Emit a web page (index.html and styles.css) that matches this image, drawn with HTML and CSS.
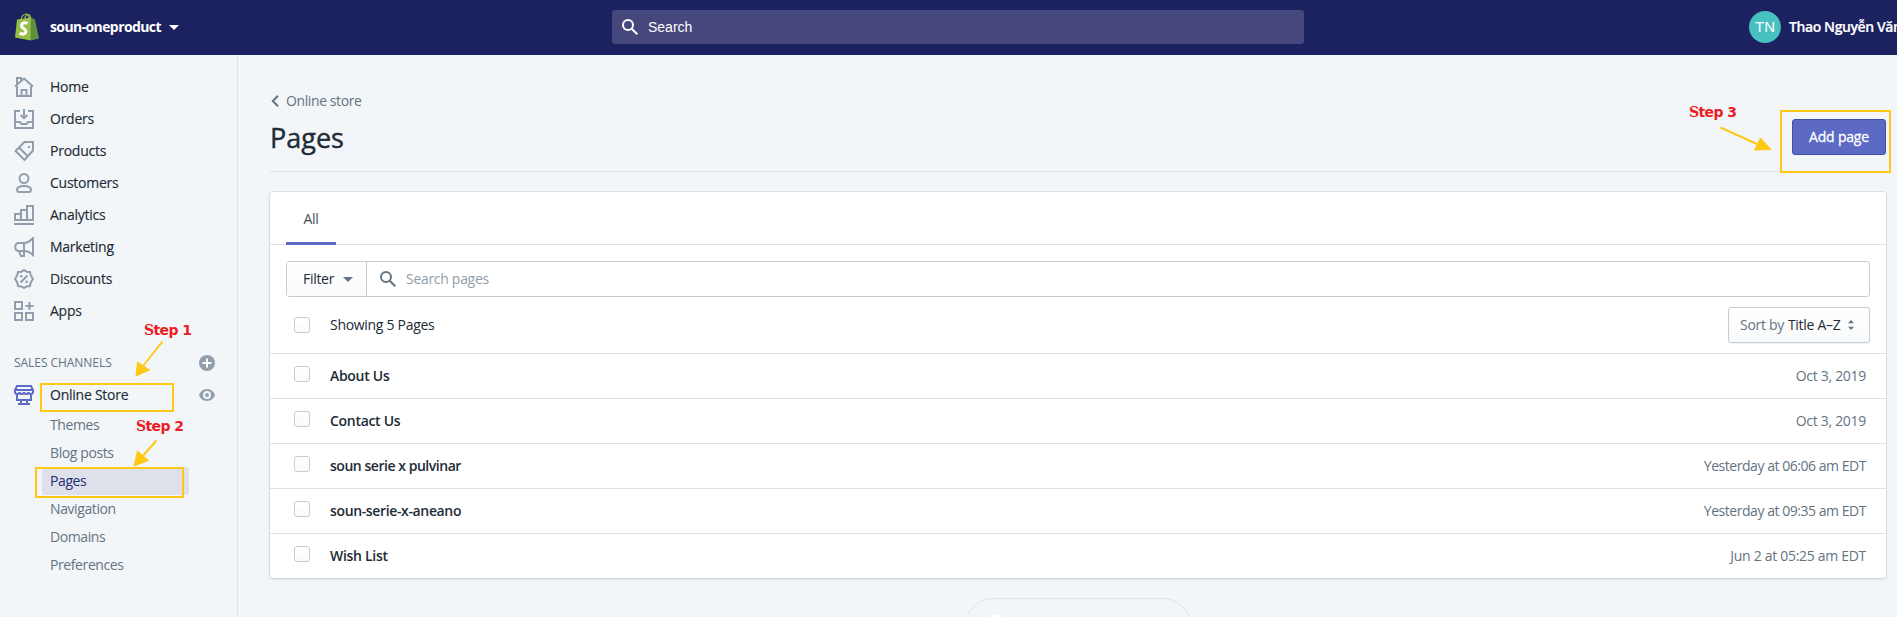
FILE: index.html
```html
<!DOCTYPE html>
<html lang="en">
<head>
<meta charset="utf-8">
<title>Pages</title>
<link rel="stylesheet" href="styles.css">
</head>
<body>
<div class="app">
  <header class="topbar">
    <div class="store">
      <svg class="logo" width="24" height="28" viewBox="0 0 24 28">
        <path d="M2 6.500 16 4.500 16 27.500 0 24.500z" fill="#95bf47"/>
        <path d="M16 4.500 20 6.500 24 25.500 15.500 27.500z" fill="#5e8e3e"/>
        <path d="M6 7C6.500 3 9 .8 11 1c2 .2 3 2.200 3.200 5M9.500 6.500C10 3 12 1 13.500 1.500 15 2 15.500 4 15.500 5.500" fill="none" stroke="#95bf47" stroke-width="1.200"/>
        <path d="M12.500 10.500C10.300 9.200 6.500 9.700 6.400 12.500c-.1 2.800 4.700 3.200 4.500 6-.2 3-4 3.100-6.200 1.500" fill="none" stroke="#fff" stroke-width="3"/>
      </svg>
      <span class="store-name">soun-oneproduct</span>
      <svg class="caret" width="10" height="5" viewBox="0 0 10 5"><path d="M0 0h10L5 5z" fill="#fff"/></svg>
    </div>
    <div class="global-search">
      <svg width="16" height="16" viewBox="0 0 16 16" fill="none" stroke="#fff" stroke-width="2"><circle cx="6" cy="6" r="5"/><path d="M9.700 9.700 15.300 15.300"/></svg>
      <span>Search</span>
    </div>
    <div class="user"><span class="avatar">TN</span><span class="user-name">Thao Nguyễn Văn</span></div>
  </header>
  <div class="body">
    <nav class="sidebar">
      <a class="nav"><svg class="ic" viewBox="0 0 20 20"><path d="M3 9v10h14V9M1 9.500 10 1.500l9 8M3 8V1h4v3M7.500 19v-6h5v6"/></svg><span>Home</span></a>
      <a class="nav"><svg class="ic" viewBox="0 0 20 20"><path d="M6 2H1v17h18V2h-5M10 0v9M6.500 6 10 9.200 13.500 6M1 13h5l1.500 2h5l1.500-2h5"/></svg><span>Orders</span></a>
      <a class="nav"><svg class="ic" viewBox="0 0 20 20"><path d="M10.500 1H19v8.500L10.500 19 1.500 10zM5 6.500l9 9"/><path d="M14 5h2v2h-2z" class="solid"/></svg><span>Products</span></a>
      <a class="nav"><svg class="ic" viewBox="0 0 20 20"><circle cx="10" cy="5.500" r="4.500"/><path d="M10 13c4 0 7 1.500 7 3.500S16 19 15 19H5c-1 0-2-.5-2-2.500S6 13 10 13z"/></svg><span>Customers</span></a>
      <a class="nav"><svg class="ic" viewBox="0 0 20 20"><path d="M1 15V9h6v6zM7 15V5h6v10zM13 15V1h6v14zM0 19h20"/></svg><span>Analytics</span></a>
      <a class="nav"><svg class="ic" viewBox="0 0 20 20"><path d="M19 1v17c-3-3-5-4-9-4H5c-5 0-5-8 0-8h5c4 0 6-1.500 9-5zM10 6v8M5 14l2 5h3v-5"/></svg><span>Marketing</span></a>
      <a class="nav"><svg class="ic" viewBox="0 0 20 20"><path d="m10 1 2.500 1.700 3.500.3.700 3.300L19 10l-2.300 3.500L16 17l-3.500.4L10 19l-2.500-1.600L4 17l-.7-3.500L1 10l2.300-3.700L4 3l3.500-.3zM6.500 13.500l7-7"/><circle cx="7.300" cy="7.300" r="1.300" class="solid"/><circle cx="12.700" cy="12.700" r="1.300" class="solid"/></svg><span>Discounts</span></a>
      <a class="nav"><svg class="ic" viewBox="0 0 20 20"><path d="M1 1h7v7H1zM1 12h7v7H1zM12 12h7v7h-7zM15.500 1v8M11.500 5h8"/></svg><span>Apps</span></a>
      <div class="section"><span>SALES CHANNELS</span>
        <svg width="16" height="16" viewBox="0 0 16 16"><circle cx="8" cy="8" r="8" fill="#919eab"/><path d="M8 3.500v9M3.500 8h9" stroke="#fff" stroke-width="2"/></svg>
      </div>
      <a class="nav channel"><svg class="ic" viewBox="0 0 20 20"><path d="M3 1h14l2 4v2c0 2.500-4.500 2.500-4.500 0 0 2.500-4.500 2.500-4.500 0 0 2.500-4.500 2.500-4.500 0C5.500 9.500 1 9.500 1 7V5zM1 5h18M3 9v6h14V9M7 15v4M13 15v4M4 19h12"/></svg><span>Online Store</span>
        <svg class="eye" width="16" height="12" viewBox="0 0 16 12"><path d="M8 0c4 0 7 3 8 6-1 3-4 6-8 6S1 9 0 6c1-3 4-6 8-6z" fill="#919eab"/><circle cx="8" cy="6" r="3" fill="none" stroke="#f4f6f8" stroke-width="2"/></svg>
      </a>
      <div class="subnav"><a>Themes</a><a>Blog posts</a><a class="active">Pages</a><a>Navigation</a><a>Domains</a><a>Preferences</a></div>
    </nav>
    <main class="main">
      <div class="crumb"><svg width="8" height="12" viewBox="0 0 8 12"><path d="M7 .8 1.800 6 7 11.200" fill="none" stroke="#637381" stroke-width="2"/></svg><span>Online store</span></div>
      <div class="heading"><h1>Pages</h1><button class="primary"><span>Add page</span></button></div>
      <section class="card">
        <div class="tabs"><div class="tab"><span>All</span></div></div>
        <div class="filters">
          <div class="filter"><span>Filter</span><svg width="10" height="5" viewBox="0 0 10 5"><path d="M0 0h10L5 5z" fill="#637381"/></svg></div>
          <div class="search"><svg width="16" height="16" viewBox="0 0 16 16" fill="none" stroke="#637381" stroke-width="2"><circle cx="6" cy="6" r="5"/><path d="M9.700 9.700 15.300 15.300"/></svg><span>Search pages</span></div>
        </div>
        <div class="bulk"><i class="check"></i><span class="count">Showing 5 Pages</span>
          <div class="sort"><span class="muted">Sort by</span><span class="value">Title A–Z</span><svg width="6" height="10" viewBox="0 0 6 10" fill="#637381"><path d="M0 3.200 3 0l3 3.200zM0 6.800 3 10l3-3.200z"/></svg></div>
        </div>
        <div class="row"><i class="check"></i><b>About Us</b><time>Oct 3, 2019</time></div>
        <div class="row"><i class="check"></i><b>Contact Us</b><time>Oct 3, 2019</time></div>
        <div class="row tight"><i class="check"></i><b>soun serie x pulvinar</b><time>Yesterday at 06:06 am EDT</time></div>
        <div class="row tight"><i class="check"></i><b class="handle">soun-serie-x-aneano</b><time>Yesterday at 09:35 am EDT</time></div>
        <div class="row"><i class="check"></i><b>Wish List</b><time>Jun 2 at 05:25 am EDT</time></div>
      </section>
      <div class="help"><i></i></div>
    </main>
  </div>
  <div class="mark box1"></div><div class="mark box2"></div><div class="mark box3"></div>
  <span class="step step1">Step 1</span><span class="step step2">Step 2</span><span class="step step3">Step 3</span>
  <svg class="arrows" width="1897" height="617" viewBox="0 0 1897 617" fill="#ffc814" stroke="#ffc814" stroke-width="2">
    <path d="M162.500 341.500 143 366"/><path d="M136 376l1.500-14 12 8z" stroke-width="1"/>
    <path d="M156.500 440.500 141 458"/><path d="M134 466l3.500-15 11 9.500z" stroke-width="1"/>
    <path d="M1720.500 127.500 1757 144"/><path d="M1771 149.500l-16.500.5 6-12z" stroke-width="1"/>
  </svg>
</div>
</body>
</html>
```
FILE: styles.css
```css
* { box-sizing: border-box; }
body { margin: 0; font: 14px/20px "Open Sans", "Noto Sans", sans-serif; color: #212b36; letter-spacing: -.3px; }
.app { position: relative; width: 1897px; height: 617px; overflow: hidden; background: #f3f6f9; display: flex; flex-direction: column; }
svg { display: block; flex: none; }
span, b, time, h1 { white-space: nowrap; }
.topbar { height: 55px; flex: none; padding-bottom: 1px; background: #1c2260; color: #fff; display: grid; grid-template-columns: 612px 692px 1fr; align-items: center; font-weight: 600; }
.store { display: flex; align-items: center; padding-left: 15px; }
.store-name { margin: 0 8px 0 11px; font-weight: 700; letter-spacing: -.6px; }
.global-search { height: 34px; background: #45477d; border-radius: 3px; display: flex; align-items: center; padding-left: 10px; gap: 10px; font: 14px/20px "Liberation Sans", Arial, sans-serif; letter-spacing: 0; }
.user { display: flex; align-items: center; gap: 8px; padding-left: 445px; }
.avatar { width: 32px; height: 32px; flex: none; border-radius: 50%; background: #47c1bf; font: 15px/32px "Liberation Sans", Arial, sans-serif; text-align: center; letter-spacing: 0; }
.user-name { letter-spacing: -.4px; -webkit-text-stroke: .2px; }
.body { display: flex; flex: 1; min-height: 0; }
.sidebar { width: 238px; flex: none; border-right: 1px solid #dfe3e8; padding-top: 16px; }
.nav { height: 32px; display: flex; align-items: center; padding-left: 14px; font-weight: 500; letter-spacing: -.25px; -webkit-text-stroke: .15px; }
.ic { width: 20px; height: 20px; fill: none; stroke: #919eab; stroke-width: 2; margin-right: 16px; }
.ic .solid { fill: #919eab; stroke: none; }
.section { margin-top: 20px; height: 32px; display: flex; align-items: center; justify-content: space-between; padding: 0 22px 0 14px; font-size: 12px; letter-spacing: -.05px; color: #637381; }
.channel .ic { stroke: #5c6ac4; }
.eye { margin-left: auto; margin-right: 22px; }
.subnav { display: flex; flex-direction: column; padding-left: 42px; }
.subnav a { width: 147px; height: 28px; line-height: 28px; padding-left: 8px; border-radius: 3px; color: #637381; letter-spacing: -.4px; }
.subnav .active { background: #dfe1ea; color: #202e78; font-weight: 500; }
.main { flex: 1; padding: 36px 11px 0 32px; display: flex; flex-direction: column; }
.crumb { display: flex; align-items: center; height: 20px; gap: 7px; padding-left: 1px; color: #637381; letter-spacing: -.4px; }
.heading { height: 61px; flex: none; border-bottom: 1px solid #dfe3e8; display: flex; justify-content: space-between; align-items: flex-start; padding-top: 8px; }
h1 { margin: 1px 0 0; font-size: 27px; line-height: 36px; font-weight: 500; letter-spacing: 0; -webkit-text-stroke: .4px; }
.primary { width: 94px; height: 36px; border: 1px solid #3f4eae; border-radius: 3px; background: #5c6ac4; color: #fff; font: 500 14px/20px "Open Sans", sans-serif; letter-spacing: -.2px; padding: 0; -webkit-text-stroke: .3px; }
.card { margin-top: 20px; height: 386px; flex: none; background: #fff; border-radius: 3px; box-shadow: 0 0 0 1px rgba(63,63,68,.09), 0 1px 3px rgba(63,63,68,.15); }
.tabs { height: 53px; border-bottom: 1px solid #dfe3e8; padding-left: 16px; }
.tab { width: 50px; height: 53px; border-bottom: 3px solid #5c6ac4; text-align: center; line-height: 54px; color: #454f5b; }
.filters { margin: 16px 16px 0; height: 36px; border: 1px solid #c4cdd5; border-radius: 3px; display: flex; }
.filter { width: 80px; border-right: 1px solid #c4cdd5; background: linear-gradient(#fff,#f9fafb); display: flex; align-items: center; padding-left: 16px; gap: 9px; }
.search { display: flex; align-items: center; gap: 10px; padding-left: 13px; color: #919eab; }
.bulk { height: 56px; display: flex; align-items: center; padding: 0 16px 0 24px; }
.check { width: 16px; height: 16px; flex: none; border: 1px solid #c4cdd5; border-radius: 3px; background: linear-gradient(#fff,#f9fafb); margin-right: 20px; }
.sort { margin-left: auto; width: 142px; height: 36px; border: 1px solid #c4cdd5; border-radius: 3px; background: linear-gradient(#fff,#f9fafb); display: flex; align-items: center; padding-left: 11px; box-shadow: 0 1px 0 rgba(22,29,37,.05); }
.muted { color: #637381; margin-right: 4px; }
.value { margin-right: 8px; }
.row { height: 45px; border-top: 1px solid #dfe3e8; display: flex; align-items: center; padding: 0 20px 0 24px; }
.row .check { margin-top: -5px; }
.row b { font-weight: 600; }
.row time { margin-left: auto; color: #637381; }
.tight { letter-spacing: -.46px; }
.handle { letter-spacing: -.36px; }
.help { width: 226px; height: 56px; flex: none; margin: 20px 0 0 695px; border: 1px solid #dfe3e8; border-radius: 28px; padding: 16px 0 0 18px; }
.help i { display: block; width: 24px; height: 24px; border-radius: 50%; background: #fff; }
.mark { position: absolute; border: 2px solid #ffc814; }
.box1 { left: 40px; top: 383px; width: 134px; height: 29px; }
.box2 { left: 35px; top: 467px; width: 149px; height: 31px; }
.box3 { left: 1780px; top: 110px; width: 111px; height: 63px; }
.step { position: absolute; font: bold 14px/20px "DejaVu Sans", sans-serif; color: #ed1c24; letter-spacing: -.6px; }
.step::first-letter { font-family: "DejaVu Serif", serif; }
.step1 { left: 144px; top: 320px; }
.step2 { left: 136px; top: 416px; }
.step3 { left: 1689px; top: 102px; }
.arrows { position: absolute; left: 0; top: 0; }
```
